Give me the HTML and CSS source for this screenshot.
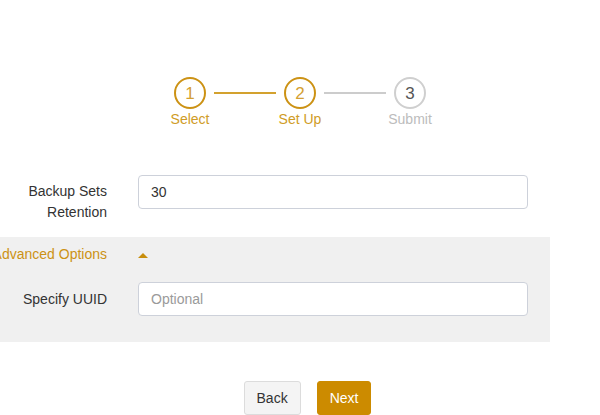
FILE: index.html
```
<!DOCTYPE html>
<html>
<head>
<meta charset="utf-8">
<link rel="stylesheet" href="styles.css">
</head>
<body>
<div class="stepper">
  <div class="step done">
    <div class="circle">1</div>
    <div class="step-label">Select</div>
  </div>
  <div class="line active"></div>
  <div class="step done">
    <div class="circle">2</div>
    <div class="step-label">Set Up</div>
  </div>
  <div class="line"></div>
  <div class="step todo">
    <div class="circle">3</div>
    <div class="step-label">Submit</div>
  </div>
</div>

<div class="form">
  <div class="row first">
    <div class="label two-line">Backup Sets<br>Retention</div>
    <input class="field" type="text" value="30">
  </div>
  <div class="panel">
    <div class="row adv">
      <div class="label adv-label">Advanced Options</div>
      <div class="caret"></div>
    </div>
    <div class="row uuid">
      <div class="label single">Specify UUID</div>
      <input class="field" type="text" placeholder="Optional">
    </div>
  </div>
</div>

<div class="actions">
  <button class="btn back">Back</button>
  <button class="btn next">Next</button>
</div>
</body>
</html>
```
FILE: styles.css
```
* { box-sizing: border-box; }
html, body {
  margin: 0;
  padding: 0;
  background: #fff;
  font-family: "Liberation Sans", Arial, sans-serif;
  font-size: 14px;
  color: #333;
  overflow: hidden;
}
.stepper {
  display: flex;
  align-items: flex-start;
  gap: 8px;
  margin-top: 77px;
  padding-left: 174px;
}
.step {
  width: 32px;
  display: flex;
  flex-direction: column;
  align-items: center;
}
.circle {
  width: 32px;
  height: 32px;
  border-radius: 50%;
  border: 2px solid #cc9214;
  color: #d4a033;
  font-size: 17px;
  display: flex;
  align-items: center;
  justify-content: center;
  line-height: 1;
}
.step-label {
  display: flex;
  justify-content: center;
  width: 32px;
  white-space: nowrap;
  margin-top: 2px;
  line-height: 17px;
  color: #d09c26;
}
.todo .circle { border-color: #cfcfcf; color: #555; }
.todo .step-label { color: #bcbcbc; }
.line {
  width: 62px;
  height: 2px;
  margin-top: 15px;
  background: #cccccc;
}
.line.active { background: #d3a12e; }

.form { margin-top: 47px; }
.row {
  display: flex;
  align-items: flex-start;
}
.label {
  width: 107px;
  margin-right: 31px;
  text-align: right;
  display: flex;
  justify-content: flex-end;
  white-space: nowrap;
  flex-shrink: 0;
}
.two-line {
  display: block;
  line-height: 21px;
  padding-top: 6px;
}
.field {
  width: 390px;
  height: 34px;
  border: 1px solid #cdd1da;
  border-radius: 4px;
  padding: 0 12px;
  font-family: "Liberation Sans", Arial, sans-serif;
  font-size: 14px;
  color: #333;
  background: #fff;
  outline: none;
}
.field::placeholder { color: #9a9a9a; }
.panel {
  width: 550px;
  margin-top: 14px;
  background: #f0f0f0;
  padding: 7px 0 26px 0;
}
.adv { align-items: center; height: 20px; }
.adv-label {
  color: #cc9214;
  line-height: 20px;
}
.caret {
  width: 0;
  height: 0;
  border-left: 5px solid transparent;
  border-right: 5px solid transparent;
  border-bottom: 5px solid #c88e0c;
  margin-top: 2px;
}
.uuid { margin-top: 18px; align-items: center; }
.single { line-height: 20px; }

.actions {
  display: flex;
  justify-content: center;
  gap: 16px;
  padding-left: 15px;
  margin-top: 39px;
}
.btn {
  height: 34px;
  padding: 0 12px;
  font-family: "Liberation Sans", Arial, sans-serif;
  font-size: 14px;
  border-radius: 3px;
  border: 1px solid #dcdcdc;
  cursor: pointer;
}
.back { background: #f4f4f4; color: #333; }
.next { background: #cc8b00; border-color: #cc8b00; color: #fff; padding: 0 12px; }
```
